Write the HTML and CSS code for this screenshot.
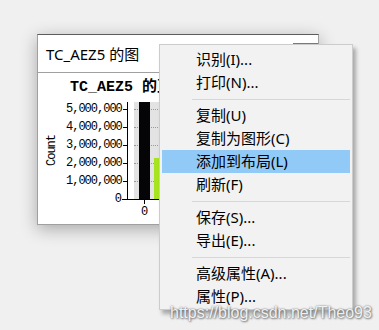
FILE: index.html
```html
<!DOCTYPE html>
<html>

	<head>
		<meta charset="UTF-8">
		<title>TC_AEZ5 的图</title>
		<link rel="stylesheet" href="styles.css">
	</head>

	<body>

		<div class="window">
			<div class="titlebar">
				<span class="title">TC_AEZ5 的图</span>
				<span class="closeEdge"></span>
			</div>
			<div class="chart">
				<div class="chartTitle">TC_AEZ5 的直方图</div>
				<div class="chartBody">
					<div class="yTitle"><span>Count</span></div>
					<div class="yLabels">
						<div class="yLabel">5,000,000</div>
						<div class="yLabel">4,000,000</div>
						<div class="yLabel">3,000,000</div>
						<div class="yLabel">2,000,000</div>
						<div class="yLabel">1,000,000</div>
						<div class="yLabel">0</div>
					</div>
					<div class="plotCol">
						<div class="plot">
							<div class="plotArea">
								<div class="gridLines">
									<div class="gridLine"></div>
									<div class="gridLine"></div>
									<div class="gridLine"></div>
									<div class="gridLine"></div>
									<div class="gridLine"></div>
								</div>
								<div class="bars">
									<div class="bar barBlack" style="height: 97px"></div>
									<div class="bar barGreen" style="height: 41px"></div>
								</div>
							</div>
						</div>
						<div class="xAxis">
							<div class="xTick"><span class="tickMark"></span><span>0</span></div>
						</div>
					</div>
				</div>
			</div>
		</div>

		<ul class="menu">
			<li class="menuItem">识别(I)...</li>
			<li class="menuItem">打印(N)...</li>
			<li class="menuSep"></li>
			<li class="menuItem">复制(U)</li>
			<li class="menuItem">复制为图形(C)</li>
			<li class="menuItem active">添加到布局(L)</li>
			<li class="menuItem">刷新(F)</li>
			<li class="menuSep"></li>
			<li class="menuItem">保存(S)...</li>
			<li class="menuItem">导出(E)...</li>
			<li class="menuSep"></li>
			<li class="menuItem">高级属性(A)...</li>
			<li class="menuItem">属性(P)...</li>
		</ul>

		<div class="watermark">https://blog.csdn.net/Theo93</div>

	</body>

</html>
```

FILE: styles.css
```css
* {
	margin: 0px;
	padding: 0px;
	box-sizing: border-box;
}

body {
	position: relative;
	width: 379px;
	height: 330px;
	overflow: hidden;
	background-color: #f0f0f0;
	color: #000;
}

.window {
	position: absolute;
	left: 37px;
	top: 34px;
	width: 282px;
	height: 191px;
	overflow: hidden;
	background-color: #fff;
	border: 1px solid #a0a0a0;
	border-top-color: #5c5c5c;
	box-shadow: 0 4px 16px rgba(0, 0, 0, 0.3);
}

.titlebar {
	position: relative;
	height: 38px;
	display: flex;
	align-items: center;
	padding-left: 8px;
	border-bottom: 1px solid #a0a0a0;
	font: 15px "Noto Sans", "Noto Sans CJK SC", sans-serif;
	white-space: nowrap;
}

.closeEdge {
	position: absolute;
	right: 0;
	top: 8px;
	width: 25px;
	height: 1px;
	background-color: #c45a5a;
}

.chart {
	padding-top: 6px;
	white-space: nowrap;
}

.chartTitle {
	padding-left: 32px;
	font: bold 15px/18px "Liberation Mono", "Noto Sans CJK SC", monospace;
}

.chartBody {
	display: flex;
	margin-top: 3px;
}

.yTitle {
	width: 28px;
	height: 101px;
	display: flex;
	align-items: center;
	justify-content: center;
	font: 12px "Liberation Mono", monospace;
	letter-spacing: -1px;
}

.yTitle span {
	writing-mode: vertical-rl;
	transform: rotate(180deg);
}

.yLabels {
	width: 61px;
	display: flex;
	flex-direction: column;
}

.yLabel {
	height: 18px;
	display: flex;
	align-items: center;
	justify-content: flex-end;
	gap: 1px;
	font: 12px "Liberation Mono", monospace;
	letter-spacing: -1px;
}

.yLabel::after {
	content: "";
	width: 5px;
	height: 1px;
	background-color: #000;
}

.plotCol {
	flex: 1;
	padding-top: 2px;
}

.plot {
	height: 98px;
	display: flex;
	padding-left: 6px;
	border-left: 1px solid #000;
	border-bottom: 1px solid #000;
}

.plotArea {
	flex: 1;
	display: grid;
	background-color: #e3e3e3;
}

.gridLines,
.bars {
	grid-area: 1 / 1;
}

.gridLines {
	display: flex;
	flex-direction: column;
	padding-top: 7px;
}

.gridLine {
	height: 18px;
	border-top: 1px dotted #9a9a9a;
}

.bars {
	display: flex;
	align-items: flex-end;
	gap: 4px;
	padding-left: 5px;
}

.bar {
	width: 11px;
}

.barBlack {
	background-color: #050508;
}

.barGreen {
	background-color: #a8e41e;
}

.xAxis {
	display: flex;
	padding-left: 12px;
}

.xTick {
	width: 11px;
	display: flex;
	flex-direction: column;
	align-items: center;
	font: 12px/12px "Liberation Mono", monospace;
}

.tickMark {
	width: 1px;
	height: 4px;
	margin-bottom: 2px;
	background-color: #000;
}

.menu {
	position: absolute;
	left: 159px;
	top: 44px;
	z-index: 2;
	width: 194px;
	list-style: none;
	padding: 3px 2px 1px;
	background-color: #f2f2f2;
	border: 1px solid #cccccc;
	box-shadow: 3px 4px 4px rgba(0, 0, 0, 0.3);
	font: 15px "Noto Sans", "Noto Sans CJK SC", sans-serif;
}

.menuItem {
	height: 23px;
	line-height: 23px;
	padding-left: 34px;
	white-space: nowrap;
}

.menuItem.active {
	background-color: #91c9f7;
}

.menuSep {
	height: 10px;
	display: flex;
	align-items: center;
	margin-left: 30px;
}

.menuSep::before {
	content: "";
	flex: 1;
	height: 1px;
	background-color: #d7d7d7;
}

.watermark {
	position: absolute;
	left: 170px;
	top: 304px;
	z-index: 3;
	font: 16px/18px "Liberation Sans", sans-serif;
	color: rgba(255, 255, 255, 0.9);
	text-shadow: 0 0 2px #666, 1px 1px 2px #888;
	white-space: nowrap;
}
```
